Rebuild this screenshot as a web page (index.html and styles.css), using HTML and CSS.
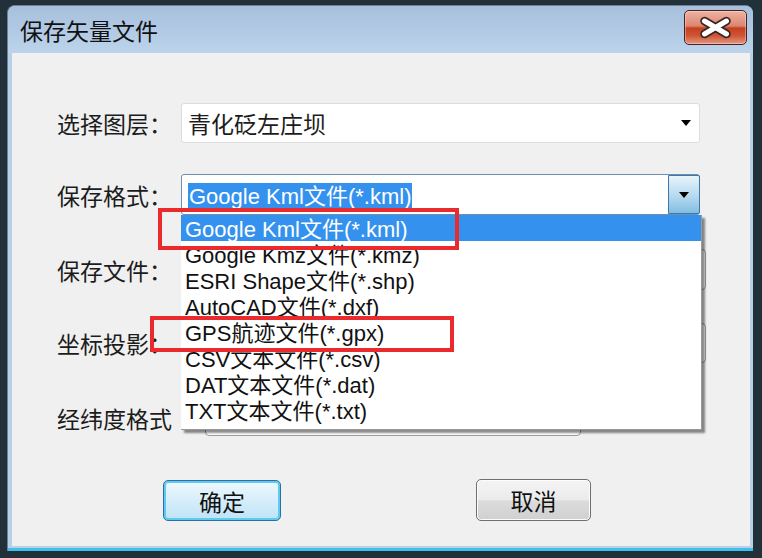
FILE: index.html
```html
<!DOCTYPE html>
<html lang="zh-CN">
<head>
<meta charset="utf-8">
<title>保存矢量文件</title>
<link rel="stylesheet" href="styles.css">
</head>
<body>
<div class="window">
  <div class="titlebar">
    <span class="title">保存矢量文件</span>
    <button class="close" aria-label="关闭">
      <svg width="61" height="33" viewBox="0 0 61 33">
        <path d="M19.5 10 L41.5 23 M41.5 10 L19.5 23" stroke="#3b2424" stroke-width="8.5" stroke-linecap="round" fill="none"/>
        <path d="M19.5 10 L41.5 23 M41.5 10 L19.5 23" stroke="#ffffff" stroke-width="5" stroke-linecap="round" fill="none"/>
      </svg>
    </button>
  </div>
  <div class="client">
    <div class="row r1">
      <span class="label">选择图层：</span>
      <div class="combo plain">
        <span class="value">青化砭左庄坝</span>
        <span class="tri"></span>
      </div>
    </div>
    <div class="row r2">
      <span class="label">保存格式：</span>
      <div class="combo active">
        <span class="value"><span class="sel">Google Kml文件(*.kml)</span></span>
        <span class="btn"><span class="tri"></span></span>
        <ul class="list">
          <li class="hi">Google Kml文件(*.kml)</li>
          <li>Google Kmz文件(*.kmz)</li>
          <li>ESRI Shape文件(*.shp)</li>
          <li>AutoCAD文件(*.dxf)</li>
          <li>GPS航迹文件(*.gpx)</li>
          <li>CSV文本文件(*.csv)</li>
          <li>DAT文本文件(*.dat)</li>
          <li>TXT文本文件(*.txt)</li>
        </ul>
      </div>
    </div>
    <div class="row r3">
      <span class="label">保存文件：</span>
      <div class="field wide"></div>
    </div>
    <div class="row r4">
      <span class="label">坐标投影：</span>
      <div class="field wide"></div>
    </div>
    <div class="row r5">
      <span class="label long">经纬度格式</span>
      <div class="field short"></div>
    </div>
    <div class="buttons">
      <button class="pbtn ok">确定</button>
      <button class="pbtn cancel">取消</button>
    </div>
    <div class="mark m1"></div>
    <div class="mark m2"></div>
  </div>
</div>
</body>
</html>
```
FILE: styles.css
```css
* { box-sizing: border-box; }
html, body { margin: 0; }
body {
  width: 762px;
  height: 558px;
  overflow: hidden;
  background: #22303a;
  padding: 5px 9px 7px 7px;
  font-family: "Noto Sans CJK SC", "Liberation Sans", sans-serif;
  color: #1c1c1c;
}
.window {
  width: 746px;
  height: 546px;
  display: flex;
  flex-direction: column;
  background: #b9d0e9;
  border-radius: 8px 8px 0 0;
  border-top: 1px solid #6d8299;
  border-left: 1px solid #6d8299;
  box-shadow: inset 0 -3px 0 #3ec0ea;
}
.titlebar {
  height: 47px;
  flex: none;
  display: flex;
  align-items: center;
  justify-content: space-between;
  padding: 0 6px 0 12px;
  background: linear-gradient(#a7c0dc, #b3cbe5 60%, #bdd4eb);
  border-radius: 7px 7px 0 0;
}
.title {
  font-size: 23px;
  line-height: 30px;
  color: #111;
}
.close {
  width: 63px;
  height: 35px;
  margin-top: -5px;
  padding: 0;
  border: 1px solid #4a2020;
  border-radius: 5px;
  background: linear-gradient(#eeb2a2, #dc8670 45%, #c4401f 52%, #cf5535 75%, #e49a82);
  box-shadow: inset 0 0 0 1px rgba(255,255,255,0.35);
  display: flex;
  align-items: center;
  justify-content: center;
}
.close svg { display: block; }
.client {
  flex: 1;
  position: relative;
  margin: 0 3px 5px 4px;
  background: #f0f0f0;
  padding: 50px 0 0 45px;
}
.row {
  display: flex;
  align-items: center;
  height: 40px;
}
.r2 { margin-top: 31px; height: 41px; }
.r3 { margin-top: 34px; height: 41px; }
.r4 { margin-top: 33px; height: 40px; }
.r5 { margin-top: 37px; height: 36px; }
.label {
  width: 124px;
  flex: none;
  font-size: 23px;
  line-height: 30px;
  white-space: nowrap;
}
.label.long { width: 148px; }
.combo {
  position: relative;
  width: 519px;
  height: 100%;
  background: #fff;
  border-radius: 3px;
  display: flex;
  align-items: center;
  padding-left: 6px;
}
.combo.plain { border: 1px solid #dcdcdc; }
.combo.active { border: 1px solid #6f8fb0; }
.value {
  flex: 1;
  font-size: 23px;
  line-height: 30px;
  white-space: nowrap;
}
.sel {
  display: inline-block;
  background: #3492ee;
  color: #fff;
  font-family: "Liberation Sans", "Noto Sans CJK SC", sans-serif;
  font-size: 22px;
  line-height: 28px;
  padding: 0 1px;
}
.tri {
  width: 0;
  height: 0;
  border-left: 5.5px solid transparent;
  border-right: 5.5px solid transparent;
  border-top: 6px solid #000;
}
.plain .tri { margin-right: 8px; }
.btn {
  width: 32px;
  height: 100%;
  border: 1px solid #3d78a8;
  border-radius: 0 2px 2px 0;
  margin-right: -1px;
  background: linear-gradient(#e8f4fb, #b5d9ef 55%, #82bde2);
  display: flex;
  align-items: center;
  justify-content: center;
}
.list {
  position: absolute;
  top: 100%;
  left: -1px;
  width: 521px;
  margin: 1px 0 0;
  padding: 0 0 6px;
  list-style: none;
  background: #fff;
  border-right: 1px solid #9a9a9a;
  border-bottom: 1px solid #9a9a9a;
  box-shadow: 3px 3px 2px rgba(0,0,0,0.45);
  z-index: 2;
}
.list li {
  height: 26px;
  line-height: 30px;
  padding-left: 4px;
  font-family: "Liberation Sans", "Noto Sans CJK SC", sans-serif;
  font-size: 22px;
  color: #111;
  white-space: nowrap;
}
.list li.hi {
  background: #3492ee;
  color: #fff;
}
.field {
  height: 100%;
  background: #fff;
  border: 1px solid #9c9c9c;
  border-radius: 4px;
}
.field.wide { width: 525px; }
.field.short { width: 376px; }
.buttons {
  display: flex;
  align-items: center;
  gap: 195px;
  margin: 42px 0 0 106px;
}
.pbtn {
  font-family: "Noto Sans CJK SC", sans-serif;
  font-size: 23px;
  color: #111;
  padding: 0;
  display: flex;
  align-items: center;
  justify-content: center;
}
.pbtn.ok {
  width: 118px;
  height: 41px;
  margin-top: 2px;
  border: 1px solid #2f6e9e;
  border-radius: 5px;
  background: linear-gradient(#eef8fe, #d6eefb 50%, #bfe3f7);
  box-shadow: inset 0 0 0 2px #5ccbf3;
}
.pbtn.cancel {
  width: 115px;
  height: 42px;
  border: 1px solid #6f6f6f;
  border-radius: 5px;
  background: linear-gradient(#f4f4f4, #ebebeb 50%, #dcdcdc 52%, #d0d0d0);
  box-shadow: inset 0 0 0 1px #fcfcfc;
}
.mark {
  position: absolute;
  border: 4px solid #ea2a2c;
  z-index: 3;
}
.m1 { left: 146px; top: 155px; width: 301px; height: 42px; }
.m2 { left: 138px; top: 263px; width: 304px; height: 36px; }
```
